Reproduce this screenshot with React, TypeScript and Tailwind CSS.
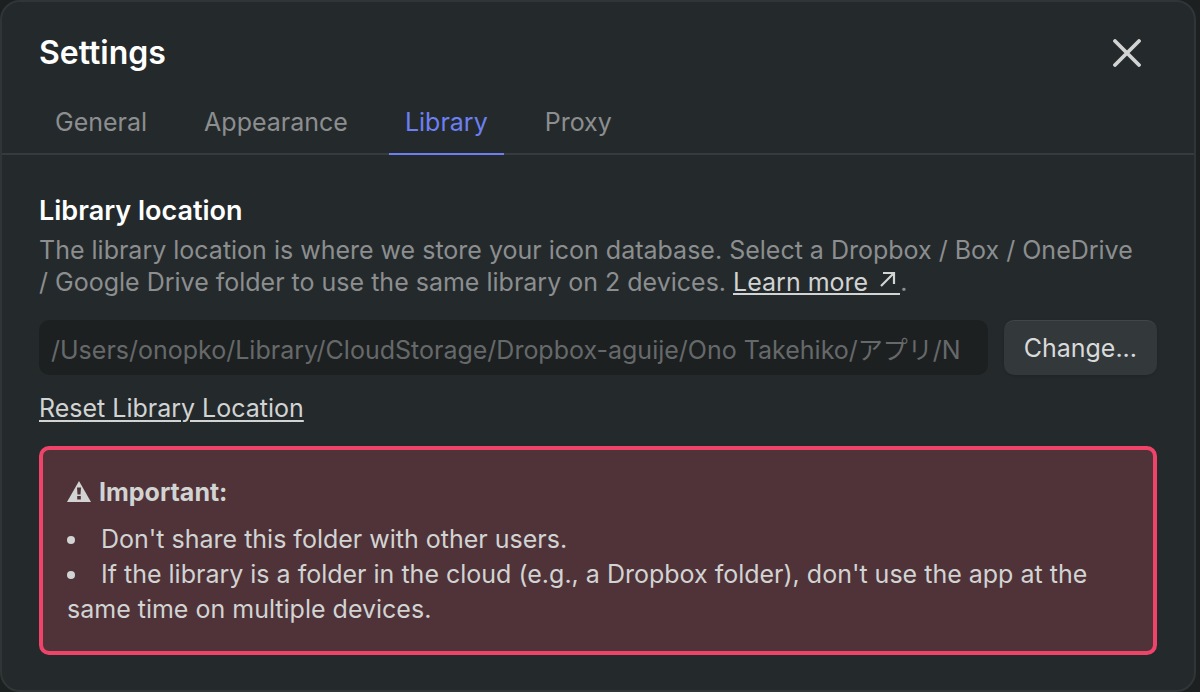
import React, { useState } from "react";

const TABS = ["General", "Appearance", "Library", "Proxy"];

const LIBRARY_PATH = "/Users/onopko/Library/CloudStorage/Dropbox-aguije/Ono Takehiko/アプリ/N";

function CloseIcon() {
  return (
    <svg viewBox="0 0 28 28" className="h-7 w-7" fill="none" stroke="currentColor" strokeWidth="3.8" strokeLinecap="round" aria-hidden="true">
      <path d="M2 2l24 24M26 2L2 26" />
    </svg>
  );
}

function ExternalIcon() {
  return (
    <svg viewBox="0 0 16 16" className="mr-1 mb-1 ml-3 inline-block h-4 w-4 align-baseline" fill="none" stroke="currentColor" strokeWidth="2.2" aria-hidden="true">
      <path d="M3 2h11v11M14 2L1 15" />
    </svg>
  );
}

function WarningIcon() {
  return (
    <svg viewBox="0 0 24 21" className="h-[21px] w-6" aria-hidden="true">
      <path d="M12 0L24 21H0z" fill="currentColor" />
      <path d="M10 6.5h4l-.5 7h-3zM10.2 15h3.6v3.5h-3.6z" fill="#4f3338" />
    </svg>
  );
}

export default function App() {
  const [tab, setTab] = useState("Library");

  return (
    <div className="min-h-screen bg-[#1c2021] pr-1 font-['Inter','Noto_Sans_CJK_JP',sans-serif] text-[25px] text-[#d2d3d3]">
      <section aria-label="Settings" className="rounded-[20px] border-2 border-[#303537] bg-[#242a2c] pb-[35px]">
        <header className="flex items-center justify-between px-[37px] pt-7">
          <h1 className="text-[32px] leading-[46px] font-semibold text-white">Settings</h1>
          <button aria-label="Close" className="mr-4">
            <CloseIcon />
          </button>
        </header>

        <div role="tablist" className="flex gap-[25px] border-b-2 border-[#363b3d] px-[37px] pt-3">
          {TABS.map((name) => (
            <button
              key={name}
              role="tab"
              aria-selected={tab === name}
              onClick={() => setTab(name)}
              className={
                tab === name
                  ? "-mb-0.5 border-b-2 border-[#6d7ff2] px-4 pt-4 pb-3 leading-[37px] text-[#6d7ff2]"
                  : "-mb-0.5 border-b-2 border-transparent px-4 pt-4 pb-3 leading-[37px] text-[#8c8e8f]"
              }
            >
              {name}
            </button>
          ))}
        </div>

        <main className="px-[37px] pt-[38px]">
          <h2 className="text-[27px] leading-9 font-semibold text-white">Library location</h2>
          <p className="mt-[5px] leading-8 text-[#8c8e8f]">
            The library location is where we store your icon database. Select a Dropbox / Box / OneDrive /&nbsp;Google
            Drive folder to use the same library on 2 devices.{" "}
            <a href="#learn-more" className="inline-block border-b-2 border-current leading-[22px] text-[#d2d3d3]">
              Learn more
              <ExternalIcon />
            </a>
            .
          </p>

          <div className="mt-[22px] flex gap-4">
            <input
              aria-label="Library location"
              readOnly
              value={LIBRARY_PATH}
              className="h-[55px] min-w-0 flex-1 rounded-[10px] bg-[#1d2021] px-3 text-[#66696a] outline-none"
            />
            <button className="h-[55px] rounded-[10px] border-t border-[#414648] bg-[#33383a] px-5 pt-0.5 text-[#d9dada] shadow-sm">
              Change...
            </button>
          </div>

          <button className="mt-[17px] leading-8 underline decoration-2 underline-offset-3">Reset Library Location</button>

          <aside className="mt-[18px] rounded-[10px] border-4 border-[#f0436a] bg-[#4f3338] px-6 pt-6 pb-6">
            <h3 className="flex items-center gap-2 leading-9 font-bold">
              <WarningIcon />
              Important:
            </h3>
            <ul className="mt-3 list-inside list-disc leading-[35px]">
              <li>Don't share this folder with other users.</li>
              <li>
                If the library is a folder in the cloud (e.g., a Dropbox folder), don't use the app at the same time on
                multiple devices.
              </li>
            </ul>
          </aside>
        </main>
      </section>
    </div>
  );
}
